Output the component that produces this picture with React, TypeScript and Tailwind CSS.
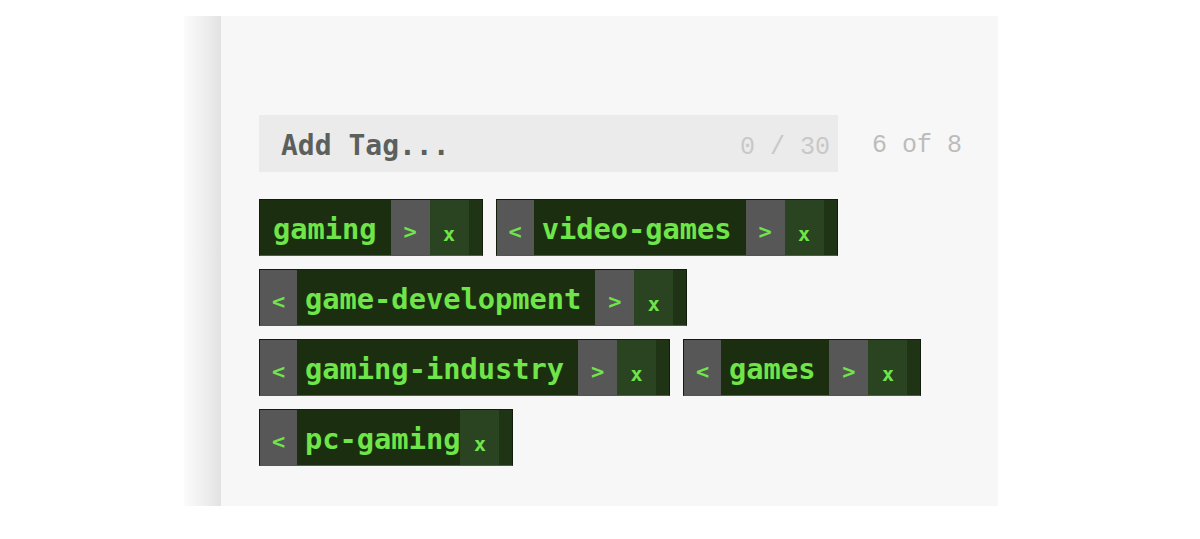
type Tag = { label: string; prev: boolean; next: boolean };

const tags: Tag[] = [
  { label: "gaming", prev: false, next: true },
  { label: "video-games", prev: true, next: true },
  { label: "game-development", prev: true, next: true },
  { label: "gaming-industry", prev: true, next: true },
  { label: "games", prev: true, next: true },
  { label: "pc-gaming", prev: true, next: false },
];

function TagChip({ tag }: { tag: Tag }) {
  return (
    <div className="flex h-[57px] border border-[#111c0b] border-b-[#3c6a2c] bg-[#1b2f10] text-[#6fe54a] font-bold">
      {tag.prev && (
        <button className="flex w-[37px] items-center justify-center bg-[#575757] text-[22px] pt-2">
          &lt;
        </button>
      )}
      <span
        className={`flex items-center text-[28.7px] leading-none pt-1 ${
          tag.prev ? "pl-2" : "pl-[13px]"
        } ${tag.next ? "pr-[14px]" : "pr-0"}`}
      >
        {tag.label}
      </span>
      {tag.next && (
        <button className="flex w-[39px] items-center justify-center bg-[#575757] text-[22px] pt-2">
          &gt;
        </button>
      )}
      <button className="flex w-[39px] items-center justify-center bg-[#2a4321] text-[20px] pt-3">
        x
      </button>
      <div className="w-[13px] bg-[#1e3414]" />
    </div>
  );
}

export default function App() {
  return (
    <div
      className="min-h-[539px] bg-white pt-4 pl-[184px]"
      style={{ fontFamily: '"DejaVu Sans Mono", "Liberation Mono", monospace' }}
    >
      <div className="flex h-[490px] w-[814px]">
        {/* left edge shade */}
        <div className="w-[37px] bg-gradient-to-r from-[#fbfbfb] via-[#f0f0f0] to-[#e2e2e2]" />

        <div className="flex-1 bg-[#f7f7f7] pl-[38px] pt-[99px]">
          {/* Input row */}
          <div className="flex items-center">
            <div className="flex h-[57px] w-[579px] items-center justify-between bg-[#ebebeb] pl-[22px] pr-2">
              <span className="text-[28px] font-bold text-[#5c605c] pt-1">Add Tag...</span>
              <span
                className="text-[25px] text-[#c8c8c8] pt-2"
                style={{ fontFamily: '"Liberation Mono", monospace' }}
              >
                0 / 30
              </span>
            </div>
            <span
              className="ml-[34px] text-[25px] text-[#bcbcbc] pt-1"
              style={{ fontFamily: '"Liberation Mono", monospace' }}
            >
              6 of 8
            </span>
          </div>

          {/* Tags */}
          <div className="mt-[27px] flex w-[704px] flex-wrap gap-[13px]">
            {tags.map((tag) => (
              <TagChip key={tag.label} tag={tag} />
            ))}
          </div>
        </div>
      </div>
    </div>
  );
}
